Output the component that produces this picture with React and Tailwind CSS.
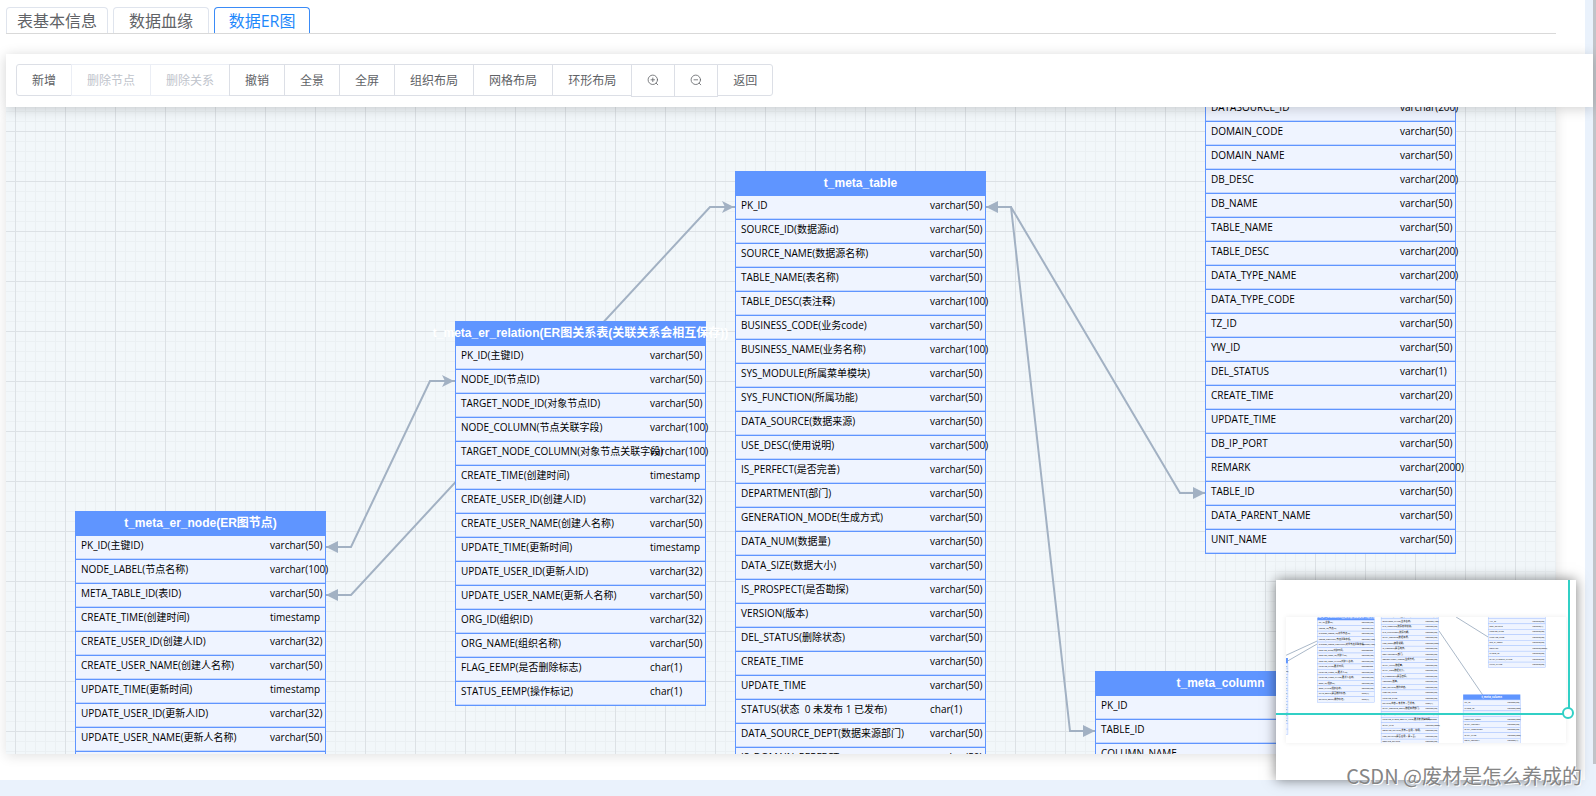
import React, { useState } from "react";
import clsx from "clsx";

const TABS = ["表基本信息", "数据血缘", "数据ER图"];

const ROW_HEIGHT = 24;
const NODE_WIDTH = 251;
const TYPE_OFFSET = 195;

const NODES = [
  {
    id: "er_node",
    title: "t_meta_er_node(ER图节点)",
    x: 69,
    y: 404,
    rows: [
      ["PK_ID(主键ID)", "varchar(50)"],
      ["NODE_LABEL(节点名称)", "varchar(100)"],
      ["META_TABLE_ID(表ID)", "varchar(50)"],
      ["CREATE_TIME(创建时间)", "timestamp"],
      ["CREATE_USER_ID(创建人ID)", "varchar(32)"],
      ["CREATE_USER_NAME(创建人名称)", "varchar(50)"],
      ["UPDATE_TIME(更新时间)", "timestamp"],
      ["UPDATE_USER_ID(更新人ID)", "varchar(32)"],
      ["UPDATE_USER_NAME(更新人名称)", "varchar(50)"],
      ["ORG_ID(组织ID)", "varchar(32)"],
      ["ORG_NAME(组织名称)", "varchar(50)"],
      ["FLAG_EEMP(是否删除标志)", "char(1)"],
      ["STATUS_EEMP(操作标记)", "char(1)"],
    ],
  },
  {
    id: "er_relation",
    title: "t_meta_er_relation(ER图关系表(关联关系会相互保存))",
    x: 449,
    y: 214,
    rows: [
      ["PK_ID(主键ID)", "varchar(50)"],
      ["NODE_ID(节点ID)", "varchar(50)"],
      ["TARGET_NODE_ID(对象节点ID)", "varchar(50)"],
      ["NODE_COLUMN(节点关联字段)", "varchar(100)"],
      ["TARGET_NODE_COLUMN(对象节点关联字段)", "varchar(100)"],
      ["CREATE_TIME(创建时间)", "timestamp"],
      ["CREATE_USER_ID(创建人ID)", "varchar(32)"],
      ["CREATE_USER_NAME(创建人名称)", "varchar(50)"],
      ["UPDATE_TIME(更新时间)", "timestamp"],
      ["UPDATE_USER_ID(更新人ID)", "varchar(32)"],
      ["UPDATE_USER_NAME(更新人名称)", "varchar(50)"],
      ["ORG_ID(组织ID)", "varchar(32)"],
      ["ORG_NAME(组织名称)", "varchar(50)"],
      ["FLAG_EEMP(是否删除标志)", "char(1)"],
      ["STATUS_EEMP(操作标记)", "char(1)"],
    ],
  },
  {
    id: "table",
    title: "t_meta_table",
    x: 729,
    y: 64,
    rows: [
      ["PK_ID", "varchar(50)"],
      ["SOURCE_ID(数据源id)", "varchar(50)"],
      ["SOURCE_NAME(数据源名称)", "varchar(50)"],
      ["TABLE_NAME(表名称)", "varchar(50)"],
      ["TABLE_DESC(表注释)", "varchar(100)"],
      ["BUSINESS_CODE(业务code)", "varchar(50)"],
      ["BUSINESS_NAME(业务名称)", "varchar(100)"],
      ["SYS_MODULE(所属菜单模块)", "varchar(50)"],
      ["SYS_FUNCTION(所属功能)", "varchar(50)"],
      ["DATA_SOURCE(数据来源)", "varchar(50)"],
      ["USE_DESC(使用说明)", "varchar(500)"],
      ["IS_PERFECT(是否完善)", "varchar(50)"],
      ["DEPARTMENT(部门)", "varchar(50)"],
      ["GENERATION_MODE(生成方式)", "varchar(50)"],
      ["DATA_NUM(数据量)", "varchar(50)"],
      ["DATA_SIZE(数据大小)", "varchar(50)"],
      ["IS_PROSPECT(是否勘探)", "varchar(50)"],
      ["VERSION(版本)", "varchar(50)"],
      ["DEL_STATUS(删除状态)", "varchar(50)"],
      ["CREATE_TIME", "varchar(50)"],
      ["UPDATE_TIME", "varchar(50)"],
      ["STATUS(状态  0 未发布 1 已发布)", "char(1)"],
      ["DATA_SOURCE_DEPT(数据来源部门)", "varchar(50)"],
      ["IS_DOMAIN_PERFECT", "varchar(50)"],
      ["UPDATE_TABLE_DETAIL_INFO(更新表详情时间)", "timestamp"],
      ["DATA_TAG", "varchar(2000)"],
      ["RELEASE_STATUS(发布 0 启用 1 停用)", "varchar(50)"],
      ["USE_STATUS(是否启用 1 是 0 否)", "varchar(50)"],
      ["SERVICE_STATUS", "varchar(50)"],
    ],
  },
  {
    id: "datasource",
    title: "",
    x: 1199,
    y: -10,
    rows: [
      ["DATASOURCE_ID", "varchar(200)"],
      ["DOMAIN_CODE", "varchar(50)"],
      ["DOMAIN_NAME", "varchar(50)"],
      ["DB_DESC", "varchar(200)"],
      ["DB_NAME", "varchar(50)"],
      ["TABLE_NAME", "varchar(50)"],
      ["TABLE_DESC", "varchar(200)"],
      ["DATA_TYPE_NAME", "varchar(200)"],
      ["DATA_TYPE_CODE", "varchar(50)"],
      ["TZ_ID", "varchar(50)"],
      ["YW_ID", "varchar(50)"],
      ["DEL_STATUS", "varchar(1)"],
      ["CREATE_TIME", "varchar(20)"],
      ["UPDATE_TIME", "varchar(20)"],
      ["DB_IP_PORT", "varchar(50)"],
      ["REMARK", "varchar(2000)"],
      ["TABLE_ID", "varchar(50)"],
      ["DATA_PARENT_NAME", "varchar(50)"],
      ["UNIT_NAME", "varchar(50)"],
    ],
  },
  {
    id: "column",
    title: "t_meta_column",
    x: 1089,
    y: 564,
    rows: [
      ["PK_ID", "varchar(50)"],
      ["TABLE_ID", "varchar(200)"],
      ["COLUMN_NAME", "varchar(200)"],
      ["COLUMN_DESC", "varchar(200)"],
      ["DATA_LENGTH", "varchar(50)"],
      ["DATA_PRECISION", "varchar(50)"],
      ["DATA_TYPE", "varchar(200)"],
      ["REAL_LENGTH", "varchar(1)"],
    ],
  },
];

const EDGES = [
  "M320 440H345L424 274H449",
  "M320 488H345L704 100H729",
  "M980 100H1005L1174 386H1199",
  "M980 100H1005L1064 624H1089",
];

// arrow heads, tip first
const ARROWS = [
  "M320 440L332 434V446Z",
  "M320 488L332 482V494Z",
  "M448 274L436 268L439 274L436 280Z",
  "M728 100L716 94L719 100L716 106Z",
  "M980 100L992 94V106Z",
  "M1199 386L1187 380V392Z",
  "M1089 624L1077 618V630Z",
];

const MINI_EDGES = [
  "M312 392L449 329",
  "M319 417L449 342",
  "M1058 224L1199 312",
  "M983 285L1175 566",
];

const ZoomIcon = ({ plus }) => (
  <svg
    viewBox="0 0 12 12"
    className="w-3 h-3"
    fill="none"
    stroke="currentColor"
    strokeWidth="0.8"
    strokeLinecap="round"
  >
    <circle cx="5.8" cy="5.8" r="4.7" />
    <path d="M9.2 9.2L10.8 10.8M4 5.8H7.6" />
    {plus && <path d="M5.8 4V7.6" />}
  </svg>
);

const ACTIONS = [
  { label: "新增" },
  { label: "删除节点", disabled: true },
  { label: "删除关系", disabled: true },
  { label: "撤销" },
  { label: "全景" },
  { label: "全屏" },
  { label: "组织布局" },
  { label: "网格布局" },
  { label: "环形布局" },
  { label: "放大", icon: <ZoomIcon plus /> },
  { label: "缩小", icon: <ZoomIcon /> },
  { label: "返回" },
];

const Toolbar = () => (
  <div className="relative z-10 -mr-[37px] flex items-start bg-white p-[10px] shadow-[0_2px_12px_rgba(0,0,0,0.18)]">
    {ACTIONS.map((action) => (
      <button
        key={action.label}
        type="button"
        disabled={action.disabled}
        aria-label={action.icon ? action.label : undefined}
        className={clsx(
          "-mr-px flex items-center justify-center border bg-white px-[15px] text-xs whitespace-nowrap first:rounded-l-[3px] last:rounded-r-[3px]",
          action.icon ? "h-[33px] pb-px" : "h-8 pt-[2px]",
          action.disabled
            ? "border-[#ebeef5] text-[#c0c4cc]"
            : "border-[#dcdfe6] text-[#606266]",
        )}
      >
        {action.icon || action.label}
      </button>
    ))}
  </div>
);

const ErTable = ({ node }) => (
  <table
    className="absolute w-[251px] table-fixed border-separate border-spacing-0 border-x border-b border-[#5f95ff] bg-[#eff4ff] text-[10px] leading-[18px] text-black"
    style={{ left: node.x, top: node.y }}
  >
    <colgroup>
      <col className="w-[194px]" />
      <col />
    </colgroup>
    {node.title && (
      <thead>
        <tr>
          <th colSpan={2} className="h-6 bg-[#5f95ff] p-0">
            <div className="flex justify-center font-['Liberation_Sans','Noto_Sans_CJK_SC',sans-serif] text-xs font-bold whitespace-nowrap text-white">
              {node.title}
            </div>
          </th>
        </tr>
      </thead>
    )}
    <tbody>
      {node.rows.map(([name, type]) => (
        <tr key={name}>
          <td className="h-6 border-t border-b border-t-[#5f95ff] border-b-[#c3d6ff] p-0 pl-[5px] align-top whitespace-pre">
            {name}
          </td>
          <td className="h-6 border-t border-b border-t-[#5f95ff] border-b-[#c3d6ff] p-0 align-top whitespace-pre">
            {type}
          </td>
        </tr>
      ))}
    </tbody>
  </table>
);

const MiniNode = ({ node }) => {
  const head = node.title ? ROW_HEIGHT : 0;
  return (
    <g>
      {node.title && (
        <>
          <rect x={node.x} y={node.y} width={NODE_WIDTH} height={ROW_HEIGHT} fill="#5f95ff" />
          <text
            x={node.x + NODE_WIDTH / 2}
            y={node.y + 16}
            textAnchor="middle"
            fontSize="12"
            fontWeight="bold"
            fill="#fff"
          >
            {node.title}
          </text>
        </>
      )}
      {node.rows.map(([name, type], i) => {
        const top = node.y + head + i * ROW_HEIGHT;
        return (
          <g key={name}>
            <rect
              x={node.x}
              y={top}
              width={NODE_WIDTH}
              height={ROW_HEIGHT}
              fill="#eff4ff"
              stroke="#a3c1ff"
              strokeWidth="2"
            />
            <text x={node.x + 6} y={top + 14} fontSize="10">
              {name}
            </text>
            <text x={node.x + TYPE_OFFSET} y={top + 14} fontSize="10">
              {type}
            </text>
          </g>
        );
      })}
    </g>
  );
};

const MiniMap = () => (
  <div className="absolute right-5 bottom-4 z-20 h-[200px] w-[300px] bg-white px-[10px] pt-[37px] shadow-[0_0_12px_rgba(0,0,0,0.5)]">
    <svg
      viewBox="312 224 1228 553"
      aria-hidden="true"
      className="h-[126px] w-[280px] shadow-[0_0_5px_rgba(0,0,0,0.08)]"
    >
      <path d={MINI_EDGES.join("")} fill="none" stroke="#a2b1c3" strokeWidth="4" />
      {NODES.map((node) => (
        <MiniNode key={node.id} node={node} />
      ))}
    </svg>
    <div className="absolute top-0 left-0 h-[135px] w-[294px] border-r-2 border-b-2 border-[#31d0c6]">
      <div className="absolute -right-[6px] -bottom-[6px] h-3 w-3 rounded-full border-2 border-[#31d0c6] bg-white" />
    </div>
  </div>
);

const App = () => {
  const [activeTab, setActiveTab] = useState(2);

  return (
    <div className="relative flex h-screen overflow-hidden bg-[#eaf2fc] font-['Open_Sans','Noto_Sans_CJK_SC',sans-serif]">
      <div className="mr-2 mb-4 flex min-w-0 flex-1 flex-col bg-white pt-[7px] pr-[29px] pb-[26px] pl-[6px]">
        {/* Tabs */}
        <div className="mb-5 flex gap-[5px] border-b border-[#d9d9d9]" role="tablist">
          {TABS.map((tab, i) => (
            <button
              key={tab}
              type="button"
              role="tab"
              aria-selected={i === activeTab}
              onClick={() => setActiveTab(i)}
              className={clsx(
                "h-[26px] min-w-24 rounded-t border border-b-0 px-[10px] text-base leading-6 whitespace-nowrap",
                i === activeTab
                  ? "border-[#3a8bf7] text-[#1e88fb]"
                  : "border-[#dfe4ed] text-[#606266]",
              )}
            >
              {tab}
            </button>
          ))}
        </div>

        <Toolbar />

        {/* Graph */}
        <div className="min-h-0 flex-1 shadow-[0_2px_12px_rgba(0,0,0,0.12)]">
          <div className="relative h-full overflow-hidden bg-[#f2f7fa] bg-[linear-gradient(to_right,#dce1e5_1px,transparent_1px),linear-gradient(to_bottom,#dce1e5_1px,transparent_1px),linear-gradient(to_right,#ebf0f3_1px,transparent_1px),linear-gradient(to_bottom,#ebf0f3_1px,transparent_1px)] bg-[size:50px_50px,50px_50px,10px_10px,10px_10px] bg-[position:9px_24px,9px_24px,9px_4px,9px_4px]">
            <svg className="absolute inset-0 h-full w-full" aria-hidden="true">
              <path d={EDGES.join("")} fill="none" stroke="#a2b1c3" strokeWidth="2" />
              <path d={ARROWS.join("")} fill="#a2b1c3" />
            </svg>
            {NODES.map((node) => (
              <ErTable key={node.id} node={node} />
            ))}
          </div>
        </div>
      </div>

      {/* Page scrollbar */}
      <div className="mb-8 w-[3px] bg-[#c1c4c9]" />

      <MiniMap />
      <div className="absolute right-[14px] bottom-[6px] z-30 font-['Noto_Sans_CJK_SC',sans-serif] text-xl leading-7 text-[#858585] [text-shadow:1px_1px_0_#ffffff]">
        CSDN @废材是怎么养成的
      </div>
    </div>
  );
};

export default App;
